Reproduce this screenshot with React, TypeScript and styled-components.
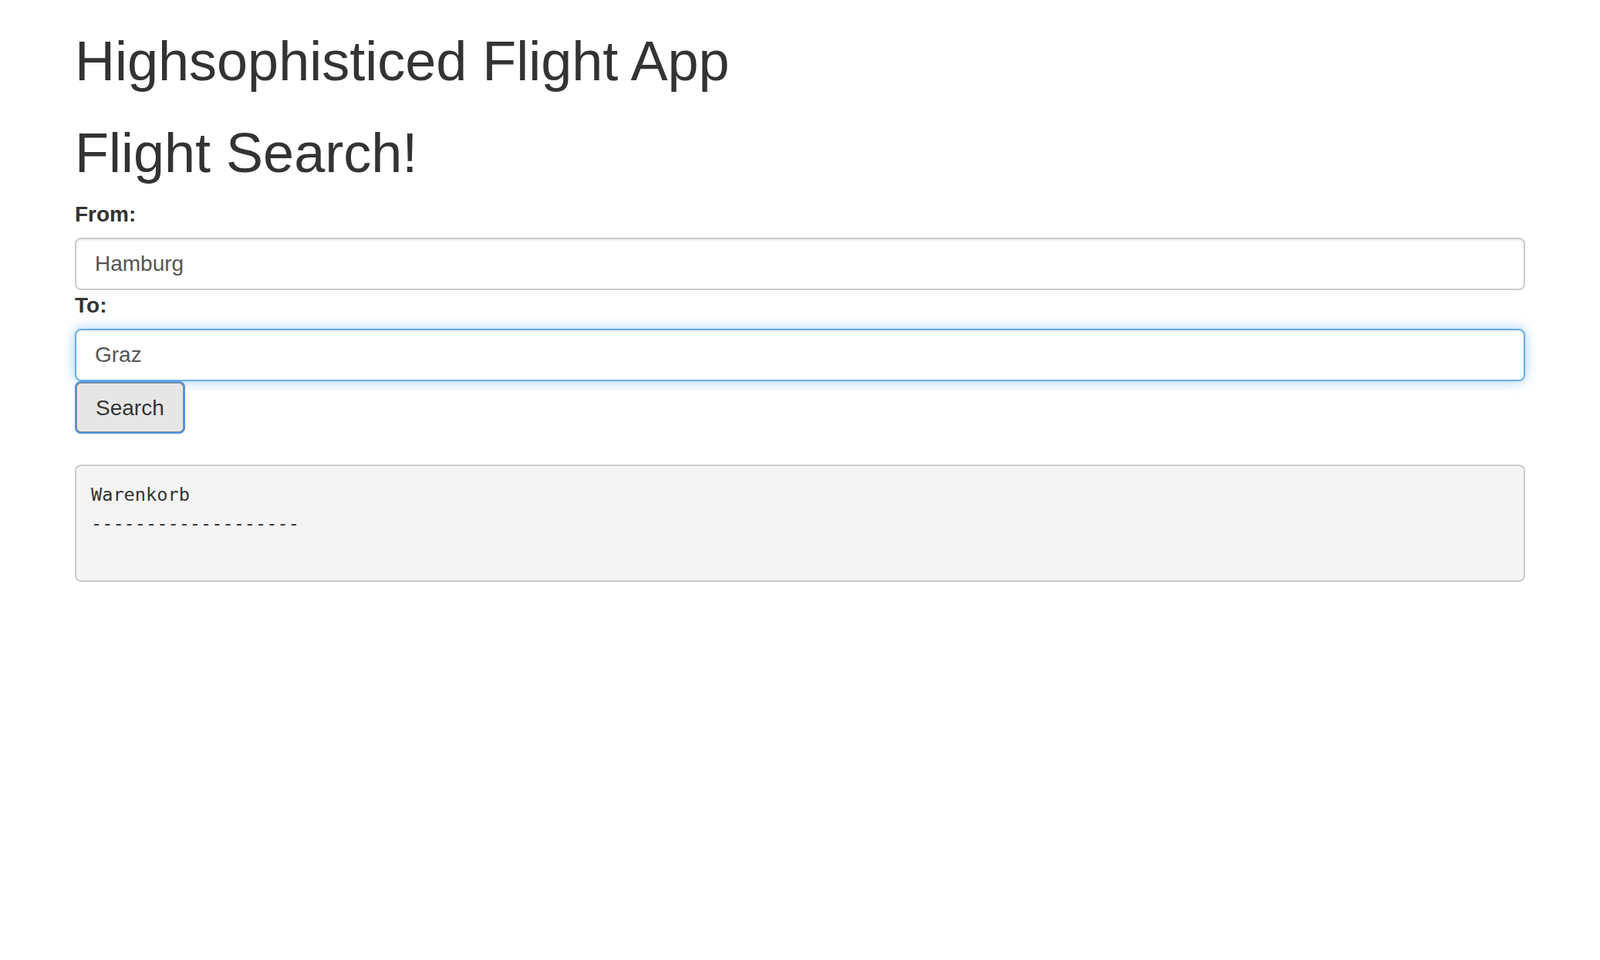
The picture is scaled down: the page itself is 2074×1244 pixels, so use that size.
import React from "react";
import styled, { createGlobalStyle } from "styled-components";

const GlobalStyle = createGlobalStyle`
  * { box-sizing: border-box; }
  html, body { margin: 0; padding: 0; background: #fff; }
  body {
    font-family: "Liberation Sans", Arial, Helvetica, sans-serif;
    font-size: 28px;
    line-height: 1.42857;
    color: #333;
  }
`;

const Container = styled.div`
  width: 1940px;
  margin: 0 auto;
  padding: 0 30px;
`;

const Title = styled.h1`
  font-family: inherit;
  font-weight: 500;
  font-size: 72px;
  line-height: 1.1;
  color: #333;
  margin: 40px 0 20px;
`;

const Form = styled.form`
  display: flex;
  flex-direction: column;
  align-items: flex-start;
`;

const Label = styled.label`
  display: inline-block;
  font-weight: 700;
  font-size: 28px;
  line-height: 40px;
  margin-bottom: 10px;
`;

const Input = styled.input<{ $focused?: boolean }>`
  display: block;
  width: 100%;
  height: 68px;
  padding: 12px 24px;
  font-family: inherit;
  font-size: 28px;
  line-height: 40px;
  color: #555;
  background: #fff;
  border: 2px solid ${(p) => (p.$focused ? "#66afe9" : "#ccc")};
  border-radius: 8px;
  outline: none;
  box-shadow: ${(p) =>
    p.$focused
      ? "inset 0 2px 2px rgba(0,0,0,.075), 0 0 16px rgba(102,175,233,.6)"
      : "inset 0 2px 2px rgba(0,0,0,.075)"};
`;

const Button = styled.button`
  display: inline-block;
  height: 68px;
  padding: 12px 24px;
  font-family: inherit;
  font-size: 28px;
  line-height: 40px;
  color: #333;
  background: #e6e6e6;
  border: 3px solid #8c8c8c;
  border-radius: 8px;
  outline: 2px solid #5791e3;
  outline-offset: -2px;
  cursor: pointer;
`;

const Cart = styled.pre`
  margin: 40px 0 20px;
  padding: 19px;
  font-family: "DejaVu Sans Mono", "Liberation Mono", monospace;
  font-size: 23.6px;
  line-height: 36.4px;
  color: #333;
  background: #f4f4f4;
  border: 2px solid #ccc;
  border-radius: 8px;
  white-space: pre;
  overflow: auto;
`;

export default function App() {
  return (
    <>
      <GlobalStyle />
      <Container>
        <Title>Highsophisticed Flight App</Title>
        <Title>Flight Search!</Title>
        <Form onSubmit={(e) => e.preventDefault()}>
          <Label htmlFor="from">From:</Label>
          <Input id="from" defaultValue="Hamburg" />
          <Label htmlFor="to">To:</Label>
          <Input id="to" defaultValue="Graz" $focused />
          <Button type="submit">Search</Button>
        </Form>
        <Cart>{"Warenkorb\n-------------------\n\n"}</Cart>
      </Container>
    </>
  );
}
